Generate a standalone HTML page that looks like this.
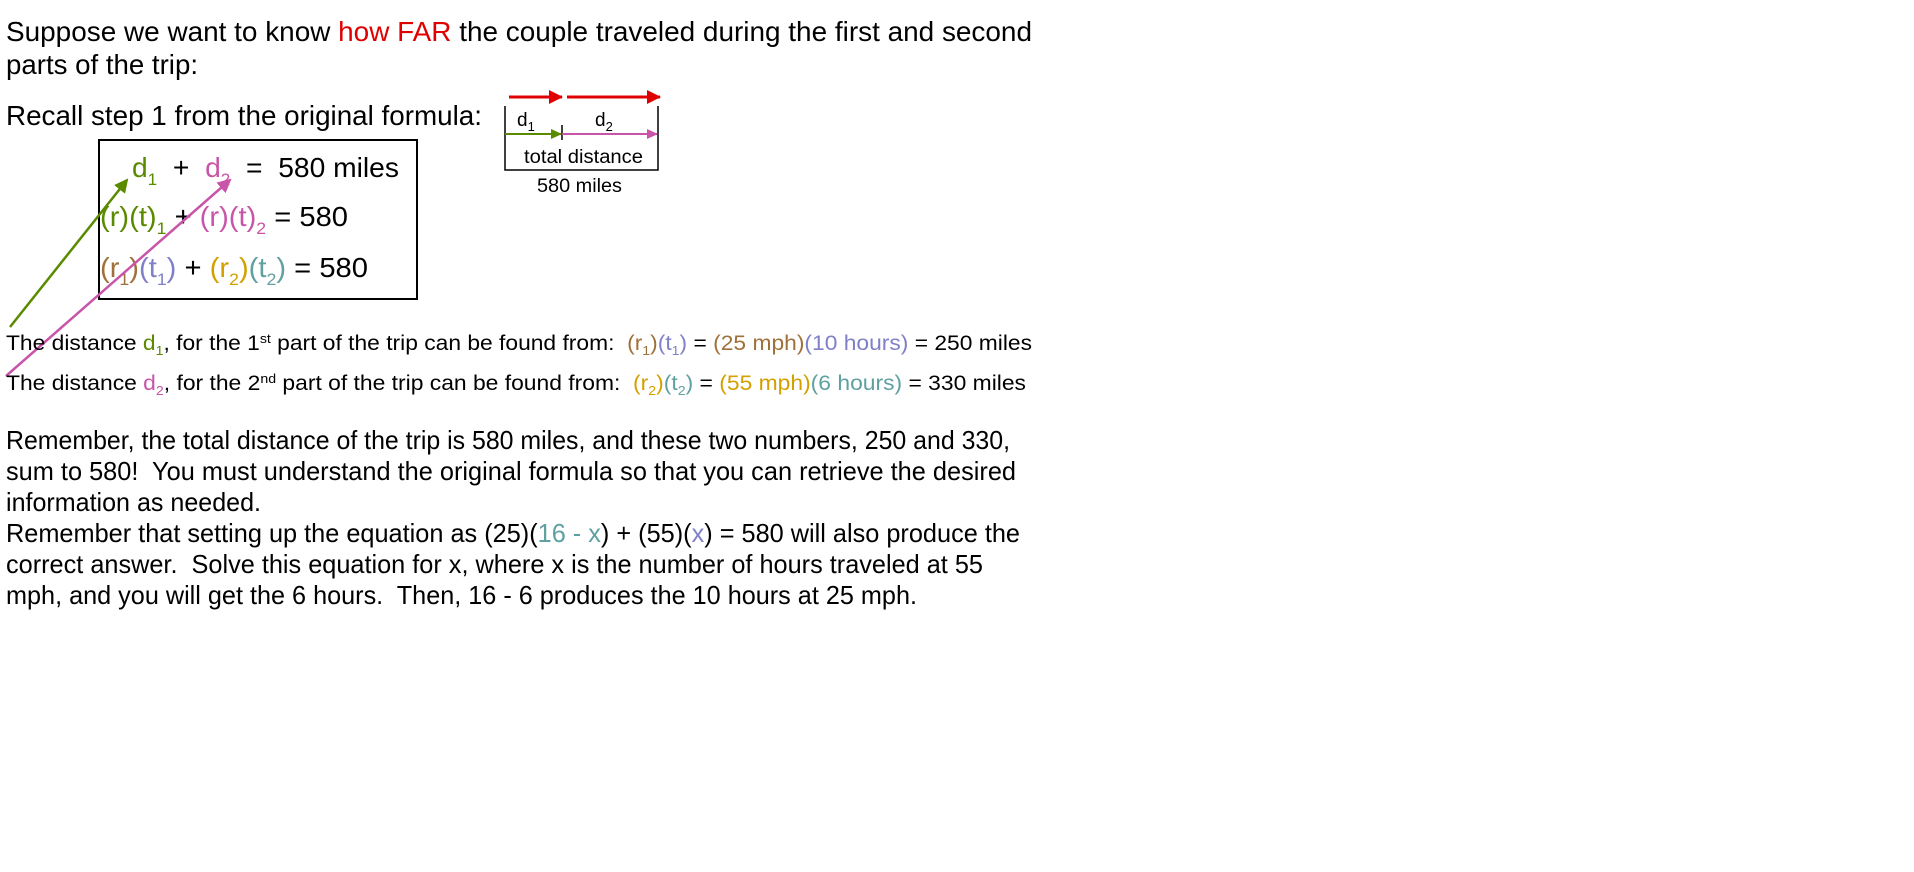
<!DOCTYPE html>
<html><head><meta charset="utf-8"><style>
html,body{margin:0;padding:0;background:#fff;width:1914px;height:872px;overflow:hidden}
svg{display:block;font-family:"Liberation Sans",Arial,sans-serif}
text{white-space:pre}
</style></head><body>
<svg width="1914" height="872" viewBox="0 0 1914 872" xmlns="http://www.w3.org/2000/svg" xml:space="preserve">
<defs>
<marker id="mg" markerWidth="11" markerHeight="10" refX="10" refY="5" orient="auto" markerUnits="userSpaceOnUse"><path d="M0,0 L11,5 L0,10 z" fill="#5a8a00"/></marker>
<marker id="mp" markerWidth="11" markerHeight="10" refX="10" refY="5" orient="auto" markerUnits="userSpaceOnUse"><path d="M0,0 L11,5 L0,10 z" fill="#c855a8"/></marker>
<marker id="mg2" markerWidth="14" markerHeight="14" refX="12" refY="7" orient="auto" markerUnits="userSpaceOnUse"><path d="M0,0 L14,7 L0,14 z" fill="#5a8a00"/></marker>
<marker id="mp2" markerWidth="14" markerHeight="14" refX="12" refY="7" orient="auto" markerUnits="userSpaceOnUse"><path d="M0,0 L14,7 L0,14 z" fill="#c855a8"/></marker>
<marker id="mr" markerWidth="14" markerHeight="14" refX="13" refY="7" orient="auto" markerUnits="userSpaceOnUse"><path d="M0,0 L14,7 L0,14 z" fill="#e00000"/></marker>
</defs>
<g font-size="28" fill="#000">
<text x="6" y="41" textLength="1026" lengthAdjust="spacingAndGlyphs">Suppose we want to know <tspan fill="#e00000">how FAR</tspan> the couple traveled during the first and second</text>
<text x="6" y="74" textLength="192" lengthAdjust="spacingAndGlyphs">parts of the trip:</text>
<text x="6" y="125" textLength="476" lengthAdjust="spacingAndGlyphs">Recall step 1 from the original formula:</text>
</g>
<rect x="99" y="140" width="318" height="159" fill="none" stroke="#000" stroke-width="2"/>
<g font-size="28">
<text x="132" y="177" textLength="267" lengthAdjust="spacingAndGlyphs"><tspan fill="#5a8a00">d<tspan font-size="17" dy="8">1</tspan></tspan><tspan dy="-8">  +  </tspan><tspan fill="#c855a8">d<tspan font-size="17" dy="8">2</tspan></tspan><tspan dy="-8">  =  580 miles</tspan></text>
<text x="100" y="226" textLength="248" lengthAdjust="spacingAndGlyphs"><tspan fill="#5a8a00">(r)(t)<tspan font-size="17" dy="8">1</tspan></tspan><tspan dy="-8"> + </tspan><tspan fill="#c855a8">(r)(t)<tspan font-size="17" dy="8">2</tspan></tspan><tspan dy="-8"> = 580</tspan></text>
<text x="100" y="277" textLength="268" lengthAdjust="spacingAndGlyphs"><tspan fill="#a0703a">(r<tspan font-size="17" dy="8">1</tspan><tspan dy="-8">)</tspan></tspan><tspan fill="#8080c8">(t<tspan font-size="17" dy="8">1</tspan><tspan dy="-8">)</tspan></tspan> + <tspan fill="#d4a000">(r<tspan font-size="17" dy="8">2</tspan><tspan dy="-8">)</tspan></tspan><tspan fill="#60a0a0">(t<tspan font-size="17" dy="8">2</tspan><tspan dy="-8">)</tspan></tspan> = 580</text>
</g>
<line x1="10" y1="327" x2="127" y2="180" stroke="#5a8a00" stroke-width="2.5" marker-end="url(#mg2)"/>
<line x1="6" y1="376" x2="230" y2="180" stroke="#c855a8" stroke-width="2.5" marker-end="url(#mp2)"/>
<line x1="509" y1="97" x2="562" y2="97" stroke="#e00000" stroke-width="3" marker-end="url(#mr)"/>
<line x1="567" y1="97" x2="660" y2="97" stroke="#e00000" stroke-width="3" marker-end="url(#mr)"/>
<path d="M505,106 V170 H658 V106" fill="none" stroke="#000" stroke-width="1.5"/>
<line x1="562" y1="125" x2="562" y2="140" stroke="#000" stroke-width="1.5"/>
<line x1="505" y1="134" x2="561" y2="134" stroke="#5a8a00" stroke-width="2" marker-end="url(#mg)"/>
<line x1="562" y1="134" x2="657" y2="134" stroke="#c855a8" stroke-width="2" marker-end="url(#mp)"/>
<g font-size="19" fill="#000">
<text x="517" y="126">d<tspan font-size="13" dy="5">1</tspan></text>
<text x="595" y="126">d<tspan font-size="13" dy="5">2</tspan></text>
<text x="524" y="163" textLength="119" lengthAdjust="spacingAndGlyphs">total distance</text>
<text x="537" y="192" textLength="85" lengthAdjust="spacingAndGlyphs">580 miles</text>
</g>
<g font-size="21" fill="#000">
<text x="6" y="350" textLength="1026" lengthAdjust="spacingAndGlyphs">The distance <tspan fill="#5a8a00">d<tspan font-size="13" dy="5">1</tspan></tspan><tspan dy="-5">, for the 1</tspan><tspan font-size="13" dy="-7">st</tspan><tspan dy="7"> part of the trip can be found from:  </tspan><tspan fill="#a0703a">(r<tspan font-size="13" dy="5">1</tspan><tspan dy="-5">)</tspan></tspan><tspan fill="#8080c8">(t<tspan font-size="13" dy="5">1</tspan><tspan dy="-5">)</tspan></tspan> = <tspan fill="#a0703a">(25 mph)</tspan><tspan fill="#8080c8">(10 hours)</tspan> = 250 miles</text>
<text x="6" y="390" textLength="1020" lengthAdjust="spacingAndGlyphs">The distance <tspan fill="#c855a8">d<tspan font-size="13" dy="5">2</tspan></tspan><tspan dy="-5">, for the 2</tspan><tspan font-size="13" dy="-7">nd</tspan><tspan dy="7"> part of the trip can be found from:  </tspan><tspan fill="#d4a000">(r<tspan font-size="13" dy="5">2</tspan><tspan dy="-5">)</tspan></tspan><tspan fill="#60a0a0">(t<tspan font-size="13" dy="5">2</tspan><tspan dy="-5">)</tspan></tspan> = <tspan fill="#d4a000">(55 mph)</tspan><tspan fill="#60a0a0">(6 hours)</tspan> = 330 miles</text>
</g>
<g font-size="26" fill="#000">
<text x="6" y="449" textLength="1004" lengthAdjust="spacingAndGlyphs">Remember, the total distance of the trip is 580 miles, and these two numbers, 250 and 330,</text>
<text x="6" y="480" textLength="1010" lengthAdjust="spacingAndGlyphs">sum to 580!  You must understand the original formula so that you can retrieve the desired</text>
<text x="6" y="511" textLength="255" lengthAdjust="spacingAndGlyphs">information as needed.</text>
<text x="6" y="542" textLength="1014" lengthAdjust="spacingAndGlyphs">Remember that setting up the equation as (25)(<tspan fill="#60a0a0">16 - x</tspan>) + (55)(<tspan fill="#8080c8">x</tspan>) = 580 will also produce the</text>
<text x="6" y="573" textLength="977" lengthAdjust="spacingAndGlyphs">correct answer.  Solve this equation for x, where x is the number of hours traveled at 55</text>
<text x="6" y="604" textLength="911" lengthAdjust="spacingAndGlyphs">mph, and you will get the 6 hours.  Then, 16 - 6 produces the 10 hours at 25 mph.</text>
</g>
</svg>
</body></html>
